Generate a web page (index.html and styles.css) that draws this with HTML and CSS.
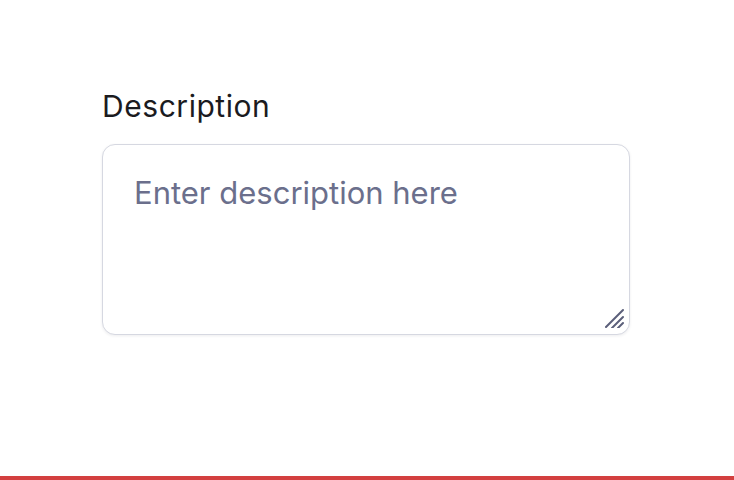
FILE: index.html
```html
<!DOCTYPE html>
<html lang="en">
<head>
<meta charset="utf-8">
<title>Description</title>
<link rel="stylesheet" href="styles.css">
</head>
<body>
<main class="page">
  <div class="field">
    <label class="field-label" for="desc">Description</label>
    <div class="textarea-wrap">
      <textarea id="desc" class="textarea" placeholder="Enter description here"></textarea>
      <svg class="grip" width="20" height="20" viewBox="0 0 20 20" aria-hidden="true">
        <path d="M2 19 L19 2 M8 20 L19 9 M14 20 L19 15" stroke="#5b5f7a" stroke-width="2" stroke-linecap="round" fill="none"/>
      </svg>
    </div>
  </div>
  <div class="bottom-bar"></div>
</main>
</body>
</html>
```
FILE: styles.css
```css
html, body {
  margin: 0;
  padding: 0;
  background: #ffffff;
}
.page {
  height: 480px;
  display: flex;
  flex-direction: column;
  font-family: Inter, "Noto Sans", sans-serif;
}
.field {
  padding: 86px 0 0 102px;
  display: flex;
  flex-direction: column;
  gap: 18px;
}
.field-label {
  font-size: 30px;
  line-height: 40px;
  letter-spacing: 0.55px;
  color: #1b1b1f;
  font-weight: 400;
}
.textarea-wrap {
  position: relative;
  width: 528px;
  height: 191px;
}
.textarea {
  box-sizing: border-box;
  width: 100%;
  height: 100%;
  margin: 0;
  border: 1px solid #d6d8e1;
  border-radius: 13px;
  box-shadow: 0 1px 3px rgba(20, 24, 50, 0.08);
  padding: 26px 31px;
  font-family: Inter, "Noto Sans", sans-serif;
  font-size: 31px;
  line-height: 44px;
  color: #1b1b1f;
  resize: none;
  outline: none;
  background: #fff;
}
.textarea::placeholder {
  color: #6b6f8c;
}
.grip {
  position: absolute;
  right: 6px;
  bottom: 7px;
}
.bottom-bar {
  margin-top: auto;
  height: 4px;
  background: #d33f3f;
}
```
